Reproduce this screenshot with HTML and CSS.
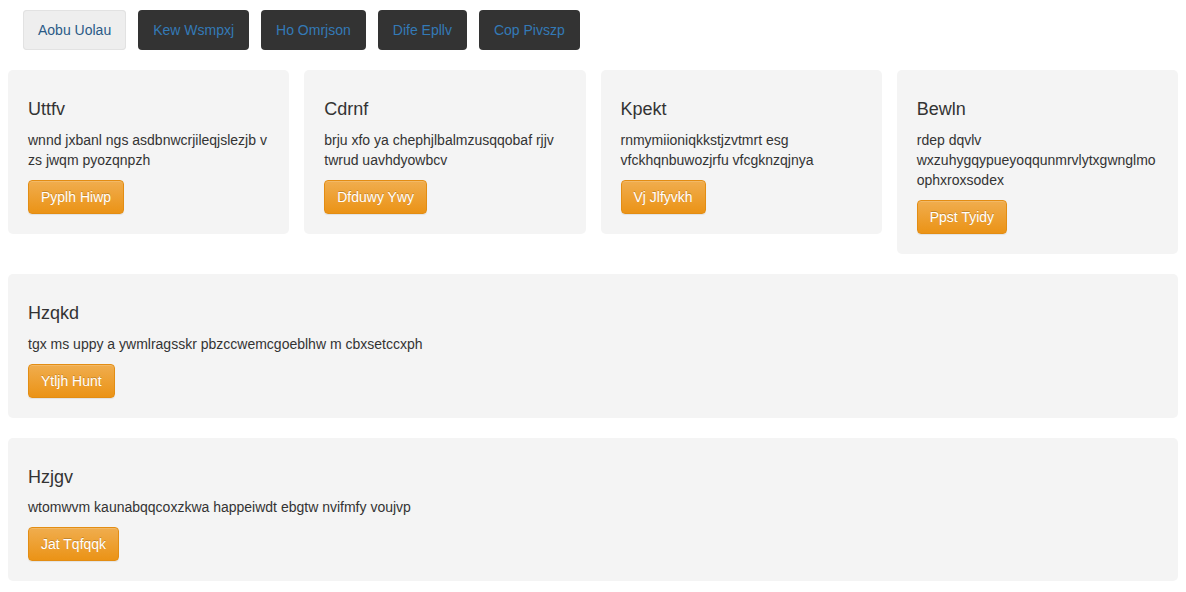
FILE: index.html
```html
<!DOCTYPE html>
<html>
<head>
<meta charset="utf-8">
<link rel="stylesheet" href="styles.css">
</head>
<body>
<nav class="nav">
  <a class="nav-btn active">Aobu Uolau</a>
  <a class="nav-btn">Kew Wsmpxj</a>
  <a class="nav-btn">Ho Omrjson</a>
  <a class="nav-btn">Dife Epllv</a>
  <a class="nav-btn">Cop Pivszp</a>
</nav>
<div class="row">
  <div class="card">
    <h3 class="card-title">Uttfv</h3>
    <p class="card-text">wnnd jxbanl ngs asdbnwcrjileqjslezjb v zs jwqm pyozqnpzh</p>
    <button class="btn">Pyplh Hiwp</button>
  </div>
  <div class="card">
    <h3 class="card-title">Cdrnf</h3>
    <p class="card-text">brju xfo ya chephjlbalmzusqqobaf rjjv twrud uavhdyowbcv</p>
    <button class="btn">Dfduwy Ywy</button>
  </div>
  <div class="card">
    <h3 class="card-title">Kpekt</h3>
    <p class="card-text">rnmymiioniqkkstjzvtmrt esg vfckhqnbuwozjrfu vfcgknzqjnya</p>
    <button class="btn">Vj Jlfyvkh</button>
  </div>
  <div class="card">
    <h3 class="card-title">Bewln</h3>
    <p class="card-text">rdep dqvlv wxzuhygqypueyoqqunmrvlytxgwnglmo ophxroxsodex</p>
    <button class="btn">Ppst Tyidy</button>
  </div>
</div>
<div class="card wide">
  <h3 class="card-title">Hzqkd</h3>
  <p class="card-text">tgx ms uppy a ywmlragsskr pbzccwemcgoeblhw m cbxsetccxph</p>
  <button class="btn">Ytljh Hunt</button>
</div>
<div class="card wide">
  <h3 class="card-title">Hzjgv</h3>
  <p class="card-text">wtomwvm kaunabqqcoxzkwa happeiwdt ebgtw nvifmfy voujvp</p>
  <button class="btn">Jat Tqfqqk</button>
</div>
</body>
</html>
```
FILE: styles.css
```css
* { box-sizing: border-box; }
body {
  margin: 0;
  padding: 10px 8px;
  font-family: "Liberation Sans", Arial, sans-serif;
  font-size: 14px;
  line-height: 20px;
  color: #333;
  background: #fff;
}
.nav {
  display: flex;
  gap: 12px;
  padding: 0 15px;
  margin-bottom: 20px;
}
.nav-btn {
  display: block;
  padding: 10px 15px;
  line-height: 20px;
  border-radius: 4px;
  background: #333;
  color: #337ab7;
  text-decoration: none;
}
.nav-btn.active {
  background: #eee;
  color: #2a5a86;
  box-shadow: inset 0 0 0 1px #e2e2e2;
}
.row {
  display: flex;
  gap: 15px;
  align-items: flex-start;
  margin-bottom: 20px;
}
.card {
  flex: 1 1 0;
  min-width: 0;
  background: #f4f4f4;
  border-radius: 5px;
  padding: 20px;
}
.card.wide {
  margin-bottom: 20px;
}
.card-title {
  margin: 10px 0;
  font-size: 18px;
  font-weight: normal;
  line-height: 1.1;
  color: #333;
}
.card-text {
  margin: 0 0 10px;
  overflow-wrap: break-word;
}
.btn {
  display: inline-block;
  font-family: inherit;
  font-size: 14px;
  line-height: 20px;
  padding: 6px 12px;
  color: #fff;
  border: 1px solid #e38d13;
  border-radius: 4px;
  background: linear-gradient(to bottom, #f0ad4e 0, #eb9316 100%);
  text-shadow: 0 -1px 0 rgba(0,0,0,0.2);
  box-shadow: inset 0 1px 0 rgba(255,255,255,0.15), 0 1px 1px rgba(0,0,0,0.075);
  cursor: pointer;
}
```
